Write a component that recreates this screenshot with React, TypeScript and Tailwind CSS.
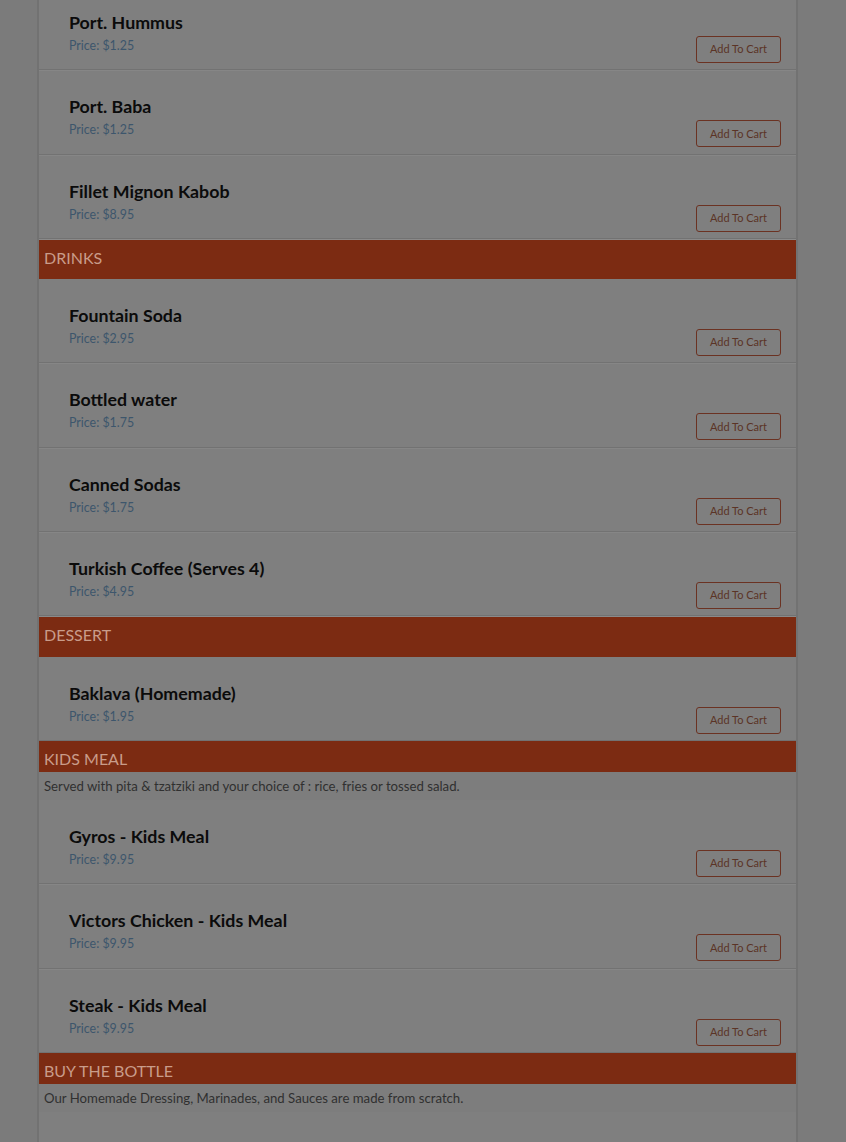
import React from 'react';

type Item = { name: string; price: string };
type Section = { title?: string; note?: string; items: Item[] };

const sections: Section[] = [
  {
    items: [
      { name: 'Port. Hummus', price: '$1.25' },
      { name: 'Port. Baba', price: '$1.25' },
      { name: 'Fillet Mignon Kabob', price: '$8.95' },
    ],
  },
  {
    title: 'DRINKS',
    items: [
      { name: 'Fountain Soda', price: '$2.95' },
      { name: 'Bottled water', price: '$1.75' },
      { name: 'Canned Sodas', price: '$1.75' },
      { name: 'Turkish Coffee (Serves 4)', price: '$4.95' },
    ],
  },
  {
    title: 'DESSERT',
    items: [{ name: 'Baklava (Homemade)', price: '$1.95' }],
  },
  {
    title: 'KIDS MEAL',
    note: 'Served with pita & tzatziki and your choice of : rice, fries or tossed salad.',
    items: [
      { name: 'Gyros - Kids Meal', price: '$9.95' },
      { name: 'Victors Chicken - Kids Meal', price: '$9.95' },
      { name: 'Steak - Kids Meal', price: '$9.95' },
    ],
  },
  {
    title: 'BUY THE BOTTLE',
    note: 'Our Homemade Dressing, Marinades, and Sauces are made from scratch.',
    items: [{ name: 'Greek Dressing', price: '$6.95' }],
  },
];

const MenuRow: React.FC<{ item: Item }> = ({ item }) => (
  <div className="h-[84.3px] flex items-start justify-between pl-[30px] pr-[15px] border-b border-[#727272] shadow-[0_1px_0_#868686]">
    <div className="pt-[24px]">
      <div className="text-[17.8px] leading-[24px] font-bold text-[#0b0b0b]">{item.name}</div>
      <div className="text-[12.4px] leading-[23px] text-[#3d566c]">Price: {item.price}</div>
    </div>
    <button className="mt-[50px] h-[27px] w-[85px] rounded-[3px] border border-[#6b3222] text-[11px] text-[#5b3426] flex items-center justify-center">
      Add To Cart
    </button>
  </div>
);

const SectionBlock: React.FC<{ section: Section }> = ({ section }) => (
  <div>
    {section.title && (
      <div
        className={`bg-[#7c2b12] px-[5px] text-[16px] text-[#c99c8a] flex items-center ${
          section.note ? 'h-[31px] pt-[5px]' : 'h-[40.3px] pb-[4px] border-t border-[#8a8a8a]'
        }`}
      >
        {section.title}
      </div>
    )}
    {section.note && (
      <div className="h-[28px] px-[5px] pt-[2px] flex items-center text-[13.2px] text-[#303030] bg-[#7d7d7d]">
        {section.note}
      </div>
    )}
    {section.items.map((it) => (
      <MenuRow key={it.name} item={it} />
    ))}
  </div>
);

export default function App() {
  return (
    <div
      className="h-[1142px] overflow-hidden bg-[#7b7b7b]"
      style={{ fontFamily: '"Lato", "Liberation Sans", sans-serif' }}
    >
      <div className="ml-[37px] w-[761px] -mt-[14px] bg-[#7f7f7f] border-l-2 border-r-2 border-[#727272]">
        {sections.map((s, i) => (
          <SectionBlock key={i} section={s} />
        ))}
      </div>
    </div>
  );
}
